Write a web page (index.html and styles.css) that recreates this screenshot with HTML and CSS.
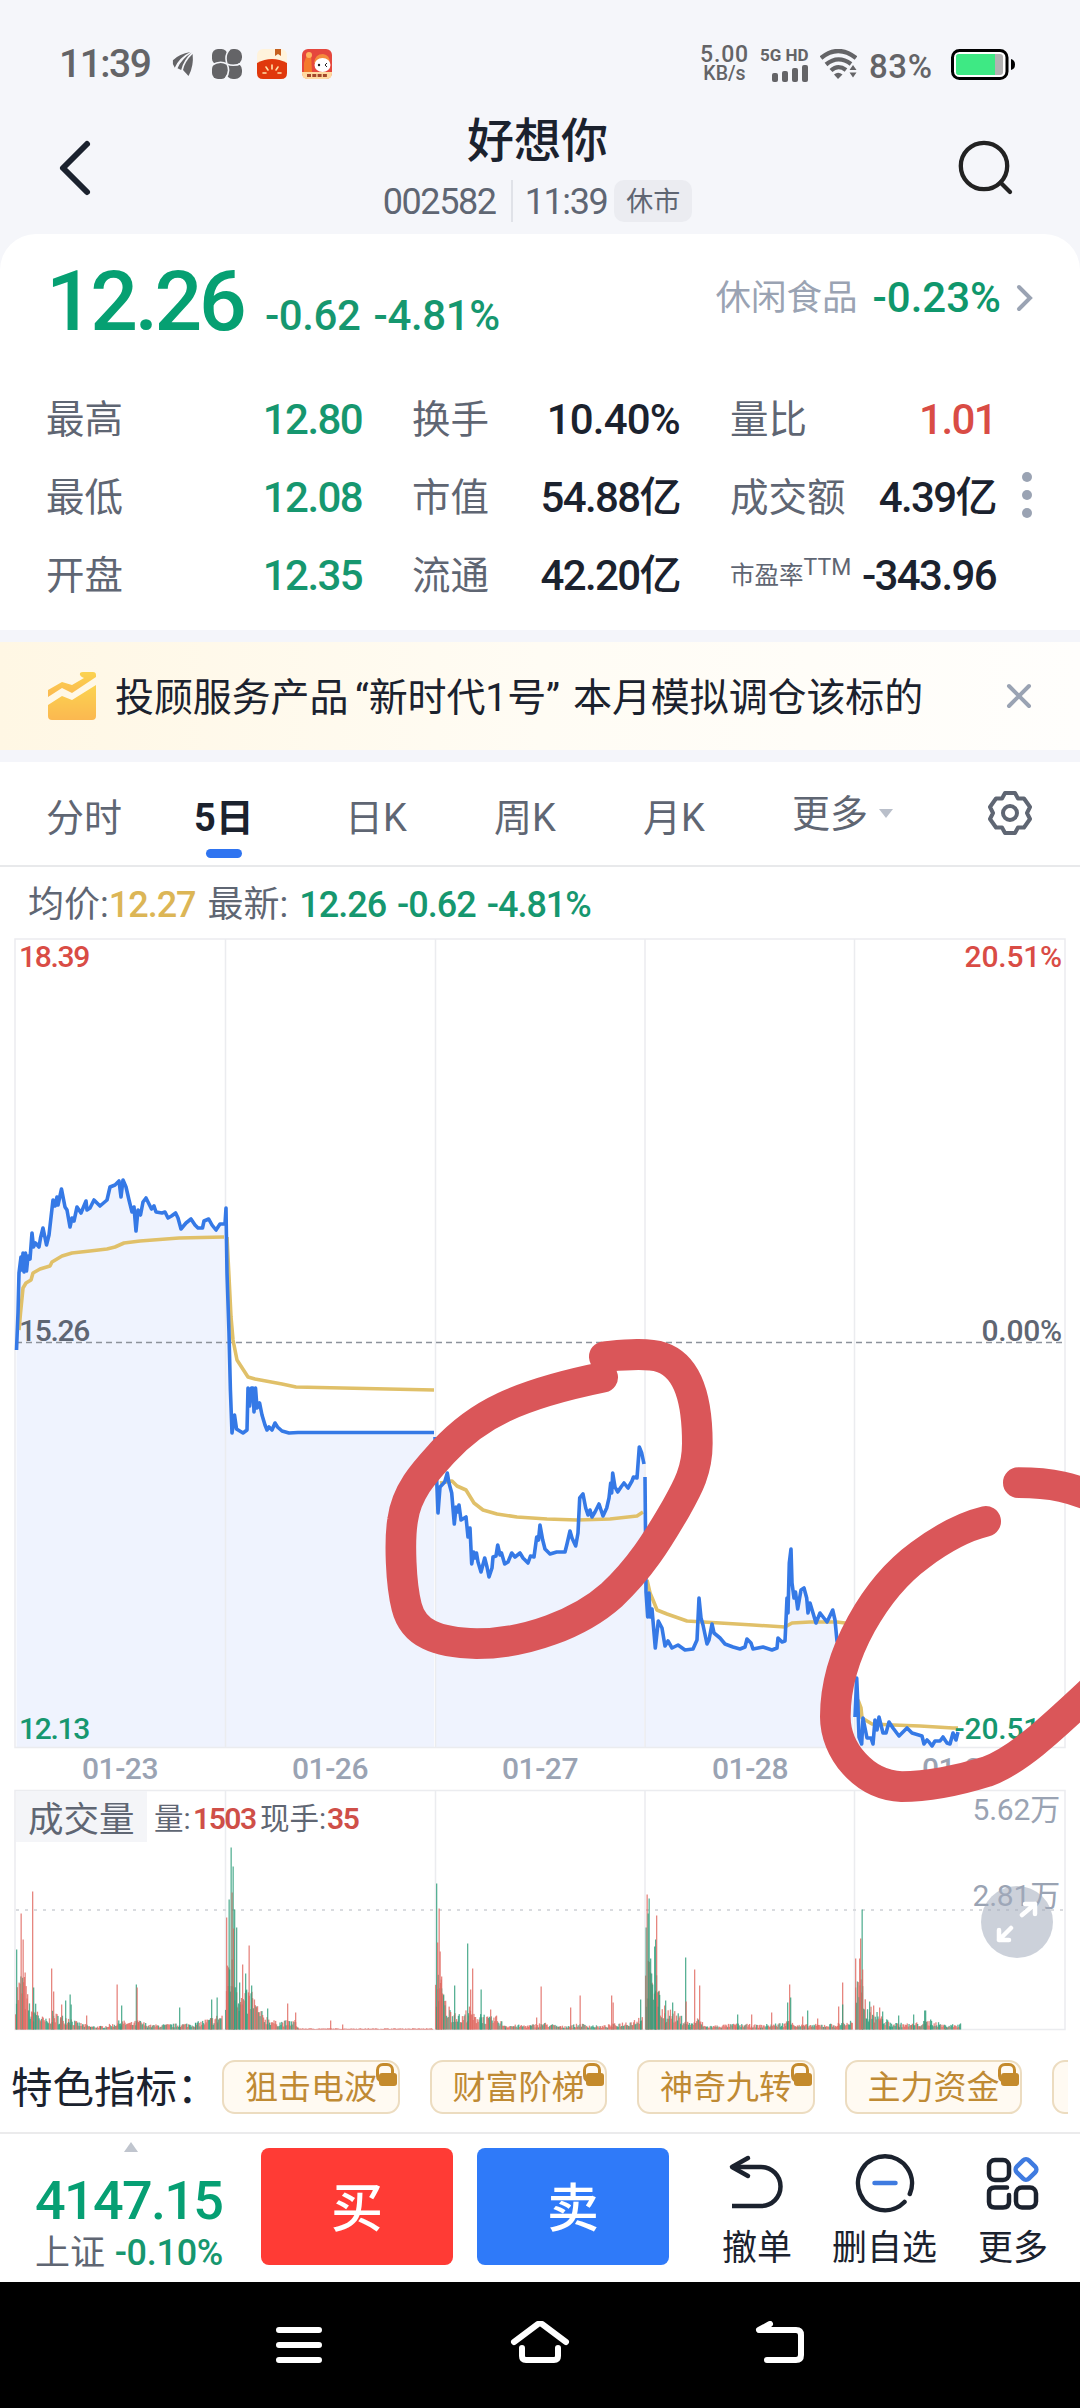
FILE: index.html
```html
<!DOCTYPE html>
<html lang="zh-CN">
<head>
  <meta charset="UTF-8" />
  <meta name="viewport" content="width=device-width, initial-scale=1.0"/>
  <title>好想你 002582</title>
  <link rel="stylesheet" href="styles.css">
</head>
<body>
  <div class="status-bar">
    <span class="clock">11:39</span>
    <svg class="app-icon feather" width="22" height="28" viewBox="0 0 24 28" fill="#646467">
      <path d="M1 10 Q8 3 20 1 Q8 7 3 18 Q0 14 1 10Z"/>
      <path d="M21.500 1.500 Q11 8 6 18.500 L10 20.500 Q13 9 21.500 1.500Z"/>
      <path d="M22.500 3 Q14 11 12 20.500 L18 27 Q24 16 22.500 3Z"/>
    </svg>
    <svg class="app-icon" width="30" height="30" viewBox="0 0 30 30">
      <g fill="#646467">
        <rect width="15.500" height="15.500" rx="6"/>
        <rect x="14" width="16" height="15.500" rx="7"/>
        <rect y="14" width="15.500" height="16" rx="6"/>
        <rect x="14" y="14" width="16" height="16" rx="7"/>
        <rect x="9" y="9" width="12" height="12"/>
      </g>
      <path d="M18 0 Q12 6 15 15 Q8 11 0 16 M30 14 Q22 18 15 15 Q19 23 13 30" fill="none" stroke="#f5f6fa" stroke-width="1.600"/>
    </svg>
    <svg class="app-icon" width="30" height="30" viewBox="0 0 30 30">
      <rect width="30" height="30" rx="6" fill="#fff3dc"/>
      <path d="M0 14 Q15 6 30 14 V24 Q30 30 24 30 H6 Q0 30 0 24Z" fill="#e0380c"/>
      <path d="M18 0 h6 v7 l-3 -2 l-3 2Z" fill="#c5601f"/>
      <path d="M15 16 v4 M9 18 l2 3 M21 18 l-2 3 M6 24 h3 M21 24 h3" stroke="#ffe0a8" stroke-width="1.600" stroke-linecap="round"/>
    </svg>
    <svg class="app-icon" width="30" height="30" viewBox="0 0 30 30">
      <rect width="30" height="30" rx="6" fill="#e5473d"/>
      <path d="M2 14 Q4 6 9 4 L10 23 H2Z" fill="#f47a2c"/>
      <circle cx="7" cy="6" r="3" fill="#ffb45e"/>
      <path d="M12 14 Q13 5 21 5 Q28 6 28 14Z" fill="#f58a3c"/>
      <ellipse cx="20.500" cy="16" rx="8" ry="7" fill="#fff"/>
      <circle cx="17" cy="16" r="1.200" fill="#222"/>
      <path d="M25 14 l-2 2 l2 2" fill="none" stroke="#222"/>
      <path d="M0 23 H30 V24 Q30 30 24 30 H6 Q0 30 0 24Z" fill="#ffd9a0"/>
      <path d="M5 26.500 H25" stroke="#a3472a" stroke-width="3" stroke-dasharray="4 1.300"/>
    </svg>

    <div class="net-speed"><b>5.00</b><span>KB/s</span></div>
    <div class="signal">
      <b>5G HD</b>
      <svg width="36" height="17" viewBox="0 0 36 17" fill="#646467">
        <rect x="0" y="8" width="6" height="9" rx="2"/>
        <rect x="10" y="6" width="6" height="11" rx="2"/>
        <rect x="20" y="3" width="6" height="14" rx="2"/>
        <rect x="30" y="0" width="6" height="17" rx="2"/>
      </svg>
    </div>
    <svg class="wifi" width="37" height="30" viewBox="0 0 37 30">
      <g fill="none" stroke="#646467" stroke-width="4.300">
        <path d="M1 9 Q18 -5 36 9"/>
        <path d="M6 15.500 Q18 5.500 31 15"/>
        <path d="M11 21.500 Q18 15 26 21"/>
      </g>
      <path d="M14 25.500 Q18 22 22.500 25.500 L18 30Z" fill="#646467"/>
      <path d="M29.500 21 h7 l-3.500 -5Z M29.500 23.500 h7 l-3.500 5Z" fill="#646467"/>
    </svg>
    <span class="battery-text">83%</span>
    <svg class="battery" width="65" height="31" viewBox="0 0 65 31">
      <rect x="1.500" y="1.500" width="54.500" height="28" rx="7" fill="#fff" stroke="#000" stroke-width="3"/>
      <rect x="5" y="5" width="47" height="21" rx="3" fill="#b3b3b3"/>
      <path d="M8 5 H44 V26 H8 Q5 26 5 23 V8 Q5 5 8 5Z" fill="#3ee984"/>
      <path d="M60 10 Q64 11 64 15.500 Q64 20 60 21Z"/>
    </svg>
  </div>

  <header>
    <svg class="back" width="34" height="60" viewBox="0 0 34 60" fill="none" stroke="#1b222e" stroke-width="6" stroke-linecap="round" stroke-linejoin="round">
      <path d="M29 6 L5 30 L29 54"/>
    </svg>
    <div class="stock-title">
      <h1>好想你</h1>
      <div class="stock-sub">
        <span class="code">002582</span>
        <span class="time">11:39</span>
        <span class="badge">休市</span>
      </div>
    </div>
    <svg class="search" width="60" height="60" viewBox="0 0 60 60" fill="none" stroke="#222" stroke-width="4.300" stroke-linecap="round">
      <circle cx="28" cy="28" r="23.200"/>
      <path d="M44.500 44.500 L54 54"/>
    </svg>
  </header>

  <section class="quote-card">
    <div class="price-row">
      <span class="price">12.26</span>
      <span class="change">-0.62 -4.81%</span>
      <div class="sector">
        <span>休闲食品</span>
        <b>-0.23%</b>
        <svg width="18" height="30" viewBox="0 0 18 30" fill="none" stroke="#9aa3b3" stroke-width="4" stroke-linecap="round">
          <path d="M3 4 L14 15 L3 26"/>
        </svg>
      </div>
    </div>
    <div class="stats">
      <div class="stat"><span>最高</span><b class="down">12.80</b></div>
      <div class="stat"><span>换手</span><b class="pct">10.40%</b></div>
      <div class="stat"><span>量比</span><b class="up">1.01</b></div>
      <div class="stat"><span>最低</span><b class="down">12.08</b></div>
      <div class="stat"><span>市值</span><b>54.88亿</b></div>
      <div class="stat"><span>成交额</span><b>4.39亿</b></div>
      <div class="stat"><span>开盘</span><b class="down">12.35</b></div>
      <div class="stat"><span>流通</span><b>42.20亿</b></div>
      <div class="stat"><span class="pe">市盈率<sup>TTM</sup></span><b>-343.96</b></div>
      <div class="more-dots"><i></i><i></i><i></i></div>
    </div>
  </section>

  <section class="notice">
    <svg width="48" height="48" viewBox="0 0 48 48">
      <defs>
        <linearGradient id="gold" x1="0" y1="0" x2="0" y2="1">
          <stop offset="0" stop-color="#fbd350"/>
          <stop offset="1" stop-color="#fbb850"/>
        </linearGradient>
      </defs>
      <path d="M0 18 L14 10 L24 13 L36 6 Q31 4 32 1 Q33 0 35 0 H45 Q48 0 48 3 V5 L24 21 L14 16 L0 25Z" fill="url(#gold)"/>
      <path d="M0 33 L14 24 L24 28 L48 13 V44 Q48 48 44 48 H4 Q0 48 0 44Z" fill="url(#gold)"/>
    </svg>
    <p>投顾服务产品 “新时代1号”&nbsp; 本月模拟调仓该标的</p>
    <svg class="close" width="28" height="28" viewBox="0 0 28 28" stroke="#9aa3b3" stroke-width="4" stroke-linecap="round">
      <path d="M4 4 L24 24 M24 4 L4 24"/>
    </svg>
  </section>

  <nav class="tabs">
    <a>分时</a>
    <a class="active">5日</a>
    <a>日K</a>
    <a>周K</a>
    <a>月K</a>
    <a class="more">更多<i></i></a>
    <svg class="gear" width="46" height="46" viewBox="0 0 46 46" fill="none" stroke="#5f6673" stroke-width="4" stroke-linejoin="round">
      <path d="M18 3 H28 L31 8.500 L37 8.500 L43 17 L40 23 L43 29 L37 37.500 L31 37.500 L28 43 H18 L15 37.500 L9 37.500 L3 29 L6 23 L3 17 L9 8.500 L15 8.500Z"/>
      <circle cx="23" cy="23" r="7"/>
    </svg>
  </nav>

  <div class="avg-row">
    <span>均价:</span><b class="gold">12.27</b><span class="latest">最新:</span><b class="down">12.26 -0.62 -4.81%</b>
  </div>

  <svg class="chart" width="1080" height="1102" viewBox="0 938 1080 1102">
    <path id="area" class="area"/>
    <g class="grid">
      <path d="M15 939 H1065 V1747.500 H15Z M225.500 939 V1747 M435.500 939 V1747 M645 939 V1747 M854.500 939 V1747"/>
      <path d="M15 1790.500 H1065 V2029.500 H15Z M225.500 1790 V2029 M435.500 1790 V2029 M645 1790 V2029 M854.500 1790 V2029"/>
    </g>
    <path class="zero-line" d="M16 1342.500 H1065"/>
    <path class="half-line" d="M16 1910 H1065"/>
    <rect x="16" y="1791" width="131" height="51" fill="#f4f5f8"/>
    <g id="volume"></g>
    <path id="avg" class="avg-line"/>
    <path id="line" class="price-line"/>

    <g class="axis">
      <text x="19" y="967" class="up">18.39</text>
      <text x="1062" y="967" class="up end">20.51%</text>
      <text x="19" y="1341" class="mid">15.26</text>
      <text x="1062" y="1341" class="mid end">0.00%</text>
      <text x="19" y="1739" class="down">12.13</text>
      <text x="1062" y="1739" class="down end">-20.51%</text>
      <text x="120" y="1779" class="date">01-23</text>
      <text x="330" y="1779" class="date">01-26</text>
      <text x="540" y="1779" class="date">01-27</text>
      <text x="750" y="1779" class="date">01-28</text>
      <text x="960" y="1779" class="date">01-29</text>
      <text x="1060" y="1820" class="muted end">5.62万</text>
      <text x="1060" y="1906" class="muted end">2.81万</text>
    </g>
    <text x="28" y="1832" class="vol-name">成交量</text>
    <text x="154" y="1829" class="vol-info">量:</text>
    <text x="193" y="1829" class="vol-num">1503</text>
    <text x="260" y="1829" class="vol-info">现手:</text>
    <text x="327" y="1829" class="vol-num">35</text>

    <g class="expand">
      <circle cx="1017" cy="1922" r="36"/>
      <path d="M1022 1915 L1035 1904 M1025 1904 H1035 V1914 M1011 1928 L999 1940 M999 1930 V1940 H1009"/>
    </g>

    <!-- hand drawn marks -->
    <g class="marks">
      <path transform="translate(360 1320) scale(.33333)" d="M733 110 C790 105 860 97 905 112 C980 138 1012 230 1012 370 C1012 450 985 500 948 565 C890 665 840 745 755 825 C660 910 500 971 350 971 C230 968 160 940 140 860 C122 790 118 660 128 600 C140 510 200 450 250 395 C310 330 370 290 430 262 C520 220 640 190 728 172"/>
      <path transform="translate(720 1440) scale(.33333)" d="M895 128 C1000 128 1060 145 1130 175 M1150 720 C1010 850 900 960 800 995 C720 1020 620 1040 545 1040 C430 1035 346 930 346 830 C346 640 470 440 600 345 C660 300 730 260 797 244"/>
    </g>
  </svg>

  <div class="indicators">
    <span class="label">特色指标：</span>
    <div class="pills">
      <span class="pill">狙击电波</span>
      <span class="pill">财富阶梯</span>
      <span class="pill">神奇九转</span>
      <span class="pill">主力资金</span>
      <span class="pill empty"></span>
    </div>
  </div>

  <footer>
    <div class="index-box">
      <i class="caret"></i>
      <div class="index-value">4147.15</div>
      <div class="index-sub">上证 <b>-0.10%</b></div>
    </div>
    <button class="buy">买</button>
    <button class="sell">卖</button>
    <div class="action undo">
      <svg width="60" height="60" viewBox="0 0 60 60" fill="none" stroke="#1b222e" stroke-width="4.500" stroke-linejoin="round">
        <path d="M21 5 L5 14 L21 23" stroke-linecap="round"/>
        <path d="M5 14 H34 A19.500 19.500 0 0 1 34 53 H5"/>
      </svg>
      <span>撤单</span>
    </div>
    <div class="action remove">
      <svg width="60" height="60" viewBox="0 0 60 60" fill="none" stroke="#1b222e" stroke-width="4.500" stroke-linecap="round">
        <path d="M49.500 49 A27 27 0 1 1 54.800 41"/>
        <path d="M19.500 30 H40.500" stroke="#3f7be0"/>
      </svg>
      <span>删自选</span>
    </div>
    <div class="action others">
      <svg width="60" height="60" viewBox="0 0 60 60" fill="none" stroke="#1b222e" stroke-width="4.500" stroke-linecap="round">
        <rect x="6" y="7" width="20" height="20" rx="6"/>
        <path d="M24 34.500 H12 Q6 34.500 6 40 V49 Q6 54.500 12 54.500 H20 Q26 54.500 26 49 V42"/>
        <rect x="33" y="34.500" width="20" height="20" rx="6"/>
        <rect x="34.500" y="8" width="17" height="17" rx="4" transform="rotate(45 43 16.500)" stroke="#3f7be0"/>
      </svg>
      <span>更多</span>
    </div>
  </footer>

  <div class="system-nav">
    <svg width="52" height="48" viewBox="0 0 52 48"><path d="M6 9 H46 M6 24 H46 M6 39 H46"/></svg>
    <svg width="60" height="48" viewBox="0 0 60 48"><path d="M4 21 L28 3 Q30 2 32 3 L56 21 M12 27 V35 Q12 39 16 39 H44 Q48 39 48 35 V27"/></svg>
    <svg width="52" height="48" viewBox="0 0 52 48"><path d="M16 3 L5 9 H42 Q47 9 47 14 V34 Q47 39 42 39 H13"/></svg>
  </div>

  <script src="chart.js"></script>
</body>
</html>
```
FILE: styles.css
```css
:root {
  --bg: #f5f6fa;
  --ink: #1b222e;
  --sub: #5f6673;
  --muted: #9aa3b3;
  --up: #d94c45;
  --down: #16976f;
  --gold: #dcb656;
  --blue: #2f7af9;
}
* { box-sizing: border-box; }
body {
  margin: 0;
  width: 1080px;
  font-family: Roboto, "Noto Sans CJK SC", sans-serif;
  background: #fff;
  color: var(--ink);
  overflow-x: hidden;
}
svg { display: block; flex: none; }
b { font-weight: 500; }
.up { color: var(--up); fill: var(--up); }
.down { color: var(--down); fill: var(--down); }
.gold { color: var(--gold); }

/* status bar */
.status-bar {
  height: 96px;
  padding: 32px 64px 0 59px;
  background: var(--bg);
  color: #646467;
  display: flex;
  align-items: center;
}
.clock {
  width: 98px;
  margin-right: 15px;
  font-size: 39px;
  font-weight: 500;
  letter-spacing: -1.5px;
}
.app-icon { margin-right: 15px; }
.feather { margin-right: 18px; }
.net-speed {
  width: 51px;
  margin-left: auto;
  margin-right: 10px;
  text-align: center;
  font-weight: 500;
}
.net-speed b, .net-speed span { display: block; line-height: 19px; }
.net-speed b { font-size: 23px; letter-spacing: 0.8px; }
.net-speed span { font-size: 19.5px; }
.signal { width: 49px; margin-right: 11px; }
.signal b { display: block; font-size: 17px; line-height: 17px; font-weight: 700; white-space: nowrap; }
.signal svg { margin: 1px 0 0 12px; }
.wifi { margin-right: 12px; }
.battery-text { width: 70px; margin-right: 12px; font-size: 33px; padding-top: 4px; letter-spacing: 0.6px; font-weight: 500; }

/* header */
header {
  height: 174px;
  margin-bottom: -36px;
  padding: 14px 64px 0 58px;
  background: var(--bg);
  display: flex;
  justify-content: space-between;
}
.back, .search { margin-top: 28px; }
.stock-title { margin-left: 27px; }
.stock-title h1 {
  margin: 0;
  font-size: 47px;
  line-height: 62px;
  font-weight: 500;
  text-align: center;
}
.stock-sub {
  margin-top: 8px;
  height: 42px;
  line-height: 45px;
  display: flex;
  color: var(--sub);
  font-size: 36px;
  letter-spacing: -1.4px;
}
.code { padding-right: 15px; border-right: 2px solid #e0e2e8; }
.time { padding-left: 12px; margin-right: 7px; }
.badge {
  padding: 0 12px;
  border-radius: 10px;
  background: #ebecf1;
  font-size: 27px;
  letter-spacing: 0;
}

/* quote */
.quote-card {
  position: relative;
  height: 396px;
  padding: 25px 46px 0;
  background: #fff;
  border-radius: 36px 36px 0 0;
}
.price-row { display: flex; align-items: baseline; height: 84px; line-height: 86px; }
.price {
  width: 219px;
  font-size: 84px;
  font-weight: 500;
  letter-spacing: -3.4px;
  color: #06a072;
}
.change { font-size: 42px; letter-spacing: -0.4px; word-spacing: 3px; color: var(--down); font-weight: 500; }
.sector {
  margin-left: auto;
  display: flex;
  align-items: center;
  align-self: flex-start;
  margin-top: -4px;
  font-size: 42px;
  letter-spacing: 0;
}
.sector span { font-size: 35.500px; color: var(--muted); margin-right: 15px; }
.sector b { color: #0f976c; margin-right: 15px; }
.stats {
  margin-top: 38px;
  display: grid;
  grid-template-columns: 316px 268px 266px;
  column-gap: 50px;
}
.stat {
  display: flex;
  justify-content: space-between;
  align-items: center;
  height: 78px;
  line-height: 80px;
  white-space: nowrap;
}
.stat span { font-size: 38.500px; color: var(--sub); }
.stat b { font-size: 42px; letter-spacing: -1.6px; }
.stat .pct { letter-spacing: -0.8px; }
.stat .pe { font-size: 24.500px; }
.pe sup { font-size: 23px; line-height: 1; vertical-align: 9px; }
.more-dots { position: absolute; left: 1022px; top: 238px; }
.more-dots i {
  display: block;
  width: 10px;
  height: 10px;
  margin-bottom: 8px;
  border-radius: 50%;
  background: var(--muted);
}

/* notice */
.notice {
  height: 132px;
  padding: 0 47px 0 48px;
  display: flex;
  align-items: center;
  background: linear-gradient(90deg, #fff7e4, #fffcf4 50%, #fffefc);
  border-top: 12px solid #f4f5fa;
  border-bottom: 12px solid #f4f5fa;
}
.notice p {
  margin: 4px 0 0 19px;
  font-size: 39px;
  line-height: 60px;
  letter-spacing: -0.1px;
  word-spacing: -3px;
  white-space: pre;
}
.notice .close { margin-left: auto; }

/* period tabs */
.tabs {
  height: 105px;
  padding-left: 46px;
  display: flex;
  line-height: 112px;
  font-size: 38px;
  color: var(--sub);
  border-bottom: 2px solid #e8e9eb;
}
.tabs a { width: 149px; white-space: nowrap; }
.tabs a:first-child { width: 148px; }
.tabs .active { position: relative; color: var(--ink); font-weight: 700; width: 151px; }
.tabs .active::after {
  content: "";
  position: absolute;
  left: 12px;
  top: 87px;
  width: 36px;
  height: 9px;
  border-radius: 5px;
  background: #2f74f0;
}
.tabs .more { width: 195px; display: flex; align-items: center; }
.tabs .more i {
  margin-left: 11px;
  border: 7px solid transparent;
  border-top: 9px solid #b9bfca;
  border-bottom: 0;
}
.gear { margin-top: 28px; }

.avg-row {
  height: 71px;
  padding-left: 28px;
  display: flex;
  line-height: 77px;
  font-size: 36px;
  color: var(--sub);
}
.avg-row b { font-size: 36px; letter-spacing: -1px; word-spacing: 3px; }
.avg-row .latest { margin-left: 12px; margin-right: 11px; }

/* chart */
.area { fill: #eff3fe; }
.grid { fill: none; stroke: #ebecef; stroke-width: 1.500; }
.zero-line { stroke: #8d929b; stroke-width: 1.500; stroke-dasharray: 6 4; }
.half-line { stroke: #d9dbdf; stroke-width: 2; stroke-dasharray: 3 6; }
.price-line { fill: none; stroke: #3579e6; stroke-width: 3.600; stroke-linejoin: round; }
.avg-line { fill: none; stroke: #e0c069; stroke-width: 3.600; stroke-linejoin: round; }
.axis text { font-size: 30px; font-weight: 500; letter-spacing: -1.300px; }
.axis .end { text-anchor: end; letter-spacing: -0.200px; }
.axis .mid { fill: var(--sub); }
.axis .date { fill: var(--muted); text-anchor: middle; letter-spacing: -0.500px; }
.axis .muted { fill: var(--muted); font-weight: 400; }
.vol-name { font-size: 35.500px; fill: var(--sub); }
.vol-info { font-size: 29.500px; fill: var(--sub); }
.vol-num { font-size: 30px; font-weight: 600; letter-spacing: -1.500px; fill: #cf4f48; }
.expand circle { fill: #a3abbb; opacity: 0.55; }
.expand path { fill: none; stroke: #fff; stroke-width: 4.500; stroke-linecap: round; stroke-linejoin: round; }
.marks path {
  fill: none;
  stroke: #da5659;
  stroke-width: 92;
  stroke-linecap: round;
  stroke-linejoin: round;
}

/* indicators */
.indicators {
  height: 94px;
  padding: 20px 12px 0 11px;
  display: flex;
  border-bottom: 2px solid #ebebec;
}
.indicators .label { width: 211px; flex: none; font-size: 41.500px; line-height: 57px; white-space: nowrap; }
.pills { display: flex; gap: 30px; width: 846px; overflow: hidden; }
.pill {
  position: relative;
  flex: none;
  width: 177.500px;
  height: 54px;
  padding-left: 21px;
  border: 2px solid #ecdcc0;
  border-radius: 13px;
  background: #fffaf2;
  color: #bf8a34;
  font-size: 33px;
  line-height: 52px;
}
/* lock */
.pill::before {
  content: "";
  position: absolute;
  right: 4px;
  top: 1px;
  width: 12px;
  height: 14px;
  border: 3px solid #c48a2c;
  border-radius: 7px;
}
.pill::after {
  content: "";
  position: absolute;
  right: 1px;
  top: 11px;
  width: 18px;
  height: 13px;
  border-radius: 3px;
  background: #c48a2c;
}

/* bottom actions */
footer {
  height: 148px;
  display: flex;
  align-items: flex-start;
}
.index-box { position: relative; width: 261px; padding: 38px 0 0 35px; white-space: nowrap; }
.caret {
  position: absolute;
  left: 124px;
  top: 8px;
  border: 7px solid transparent;
  border-bottom: 10px solid #c0c5ce;
  border-top: 0;
}
.index-value {
  font-size: 54px;
  line-height: 57px;
  font-weight: 500;
  letter-spacing: -1.700px;
  color: #069f73;
}
.index-sub { margin-top: 3px; font-size: 35px; line-height: 42px; color: var(--sub); }
.index-sub b { color: var(--down); font-size: 36px; margin-left: 1px; letter-spacing: -0.300px; }
footer button {
  width: 192px;
  height: 117px;
  margin-top: 14px;
  padding: 0 0 5px;
  border: none;
  border-radius: 8px;
  color: #fff;
  font-family: inherit;
  font-size: 52px;
  font-weight: 500;
}
.buy { background: #ff3b35; }
.sell { background: var(--blue); margin-left: 24px; }
.action {
  display: flex;
  flex-direction: column;
  align-items: center;
  margin-top: 19px;
  font-size: 35px;
  line-height: 42px;
}
.action svg { margin-bottom: 15px; }
.undo { margin-left: 53px; }
.remove { margin-left: 40px; }
.others { margin-left: 41px; }

.system-nav {
  height: 126px;
  padding: 39px 274px 0 273px;
  display: flex;
  justify-content: space-between;
  background: #000;
}
.system-nav path {
  fill: none;
  stroke: #fff;
  stroke-width: 6;
  stroke-linecap: round;
  stroke-linejoin: round;
}
```
FILE: chart.js
```js
const BASE = 1747;
const VOL_BASE = 2029.5;

// price runs, x y pairs in chart units
const price = [
  "16.5 1350 18 1313 19 1273 21 1257 22 1270 23 1253 24 1272 25.5 1253 26.5 1271 28 1256 30 1259 32 1233 33.5 1247 35.5 1243 39 1247 40.5 1238 43 1228 46.5 1245 49 1235 51.5 1213 53 1200 55 1206 57 1197 58 1205 61.5 1189 65 1207 67 1210 70 1227 72 1218 74 1221 77 1207 81 1213 86 1201 87 1210 90 1208 94 1200 100 1206 107 1200 110 1187 115 1185 119 1181 121 1197 123 1180 126 1187 129 1200 132 1212 134 1207 136 1231 138 1210 140.5 1215 143 1202 146 1198 149 1204 151.5 1209 154 1206 156 1212 162 1213 165 1212 168 1218 171.5 1216 175.6 1213 178 1218 181 1229 186 1223 191 1219 195 1225 198 1228 202.5 1228 204 1221 208.7 1219 212 1225 216 1230 220 1224 225 1224 226 1208 227 1273 229 1333 230.4 1390 232 1433 234.5 1415 236.5 1429 243 1433 247 1430 248 1388 249.6 1406 251.4 1388 253 1388 254 1412 255.5 1388 257 1408 259.6 1403 262 1415 265 1425 267 1430 269 1427 272 1430 275 1423 277.5 1427 282 1431 289 1433 298 1432.5 434 1432.5",
  "435 1437 438 1513 440 1487 444.7 1482 447.3 1473 449 1483 451.7 1493 454.3 1524 456 1507 457.5 1512 459 1505 461 1520 466 1517 468 1537 470 1528 471.7 1564 473.7 1552 475 1558 476.5 1553 478 1562 481 1572 484.7 1558 487 1567 489 1577 492 1568 493 1557 496 1556 497.7 1545 500 1555 501.5 1553 504.7 1564 508 1562 511.7 1553 515 1557 520 1553 523 1558 528 1563 530.5 1556 534 1557 536.7 1537 538.5 1540 540 1525 542.7 1540 545 1549 550 1554 556.7 1552 565 1552 567 1544 570 1531 572 1538 575.7 1546 578 1533 579.7 1498 583 1494 585.7 1508 588 1515 590 1510 592 1517 595 1512 599 1504 603 1516 606.7 1508 609 1498 610.7 1483 611.7 1493 612.7 1473 615 1487 617.7 1492 621 1487 624 1483 628 1488 632 1481 633.5 1477 637 1478 639.3 1447 641.7 1453 644 1464",
  "645 1477 645.7 1553 646 1592 647.7 1617 649 1593 650 1617 652 1609 655.3 1648 658.3 1621 662 1628 665 1646 668 1641 672 1648 678 1645 685 1650 693 1649 697 1640 699 1598 701 1618 703 1625 707 1644 709 1640 712 1624 714 1633 720 1638 725 1644 733 1647 740 1649 745 1647 747 1639 751 1643 753 1649 763 1647 772 1650 777 1648 778 1638 782 1642 785 1641 786 1620 787 1598 788 1613 789.3 1563 791 1549 792 1583 794 1598 795.5 1592 797.7 1609 801 1590 804 1588 806.7 1598 808 1613 810 1603 813 1613 816 1623 820 1613 827 1622 832.7 1610 835 1620 837 1641 843 1638 853 1640",
  "855 1717 856.7 1678 858 1707 859 1737 861.7 1744 863 1718 867 1738 871 1738 873 1744 875 1720 877 1730 879 1717 883 1733 886 1733 889 1722 893 1728 899 1736 907 1728 912 1733 922 1736 924 1744 927 1740 929 1742 932 1746 935 1741 940 1741 943 1737 947 1743 950 1744 953 1733 956 1740 958 1732"
];

const average = [
  "19 1330 20.5 1313 23 1288 26 1283 31 1280 33 1273 40 1269 50 1266 52 1262 62 1256 72 1253 90 1251 107 1249 115 1247 124 1243 140 1241 179 1238 224 1237",
  "227 1237 228 1257 231 1317 233 1340 237 1360 248 1377 255 1379 282 1384 296 1387 434 1390",
  "440 1483 452 1481 457 1486 466 1490 474 1503 483 1510 497 1514 517 1517 547 1519 577 1520 610 1519 637 1516 643 1512",
  "647 1580 650 1593 653 1600 657 1610 667 1614 687 1621 720 1623 753 1625 785 1627 792 1623 810 1622 837 1622 853 1624",
  "858 1700 861 1708 862 1718 872 1724 893 1725 920 1726 953 1728 958 1728"
];

document.getElementById("line").setAttribute("d", price.map(p => "M" + p).join(""));
document.getElementById("avg").setAttribute("d", average.map(p => "M" + p).join(""));
document.getElementById("area").setAttribute("d", price.map(p => {
  const n = p.split(" ");
  return `M${n[0]} ${BASE}L${p}L${n[n.length - 2]} ${BASE}Z`;
}).join(""));

// volume: rough level per day, then single peaks
const levels = [
  [15,38, 22,52, 27,30, 31,15, 35,22, 40,12, 47,8, 52,15, 60,12, 68,12, 75,7, 90,3, 100,3, 112,5, 120,8, 130,6, 138,8, 150,4, 180,5, 195,6, 210,10, 222,14],
  [225,30, 228,70, 236,50, 240,30, 246,32, 252,35, 256,22, 262,14, 275,7, 295,8, 298,1, 432,1],
  [435,40, 438,60, 441,40, 445,25, 450,18, 456,18, 460,10, 468,20, 474,12, 480,16, 488,10, 495,12, 505,4, 530,4, 543,6, 560,3, 580,5, 600,3, 620,6, 632,8, 642,14],
  [645,50, 648,60, 652,40, 655,60, 659,28, 664,15, 668,18, 680,12, 690,5, 696,10, 700,8, 705,3, 735,5, 760,4, 785,6, 790,12, 795,4, 835,5, 852,8],
  [855,42, 862,40, 866,20, 872,18, 880,12, 890,6, 910,5, 930,8, 945,4, 960,5]
];
const peaks = "16 80 g,20.5 116 r,22.5 90 r,24.5 57 r,32 138 r,33 42 g,51 61 r,53 38 r,61 25 r,65 29 g,69.5 35 g,70.5 25 g,86 14 r,116.5 45 r,121 24 g,135.7 45 g,136.5 42 r,179 22 g,211 30 g,216.5 32 g,226 112 r,228.5 130 g,230.5 182 g,231.5 137 r,232.5 163 g,233 101 r,234 120 g,236 102 g,239 47 g,242 65 r,245 56 g,248.5 84 r,251 44 g,267 21 g,287 26 r,295 17 r,330 9 r,342 5 r,436 146 g,437 87 r,438.5 121 r,439.5 78 r,441 53 r,443 35 g,454 44 g,467 86 g,470 40 r,472 61 r,480.5 40 g,490 20 r,536 12 r,540.5 43 r,570 22 r,579.5 34 r,611 34 r,612.5 27 r,640 30 g,645.5 102 g,646.5 135 r,647.5 116 g,648.5 131 g,650 71 g,651 56 g,654 83 g,655 90 g,656 114 r,658 38 g,664 24 r,665 29 g,672 27 g,685 72 g,685.5 28 r,694 60 r,699 44 r,737 15 g,751 15 r,771 17 r,787 27 g,789 45 r,790 32 g,802 13 r,807 19 g,817 11 r,838 23 r,842 47 r,842 25 g,855 71 r,859 71 r,860 91 r,861.5 120 g,862 60 r,869 28 g,873 24 r,879 22 r,882 18 g,898 14 g,913 15 g,924 19 g,925 19 g,930 10 g";

let seed = 7;
function rand() {
  seed = (seed * 16807) % 2147483647;
  return seed / 2147483647;
}
function bar(x, h, c) {
  const color = c === "g" ? "#2e9e7b" : "#e0685f";
  return `<rect x="${x.toFixed(1)}" y="${(VOL_BASE - h).toFixed(1)}" width="1.3" height="${h.toFixed(1)}" fill="${color}" opacity="0.8"/>`;
}
let bars = "";
levels.forEach(l => {
  for (let i = 0; i < l.length - 2; i += 2) {
    for (let x = l[i]; x < l[i + 2]; x += 0.875) {
      const t = (x - l[i]) / (l[i + 2] - l[i]);
      const level = l[i + 1] + (l[i + 3] - l[i + 1]) * t;
      bars += bar(x, level * (0.4 + rand() * 0.85), rand() < 0.42 && level > 1.5 ? "g" : "r");
    }
  }
});
peaks.split(",").forEach(p => {
  const [x, h, c] = p.split(" ");
  bars += bar(+x, +h, c);
});
document.getElementById("volume").innerHTML = bars;
```
